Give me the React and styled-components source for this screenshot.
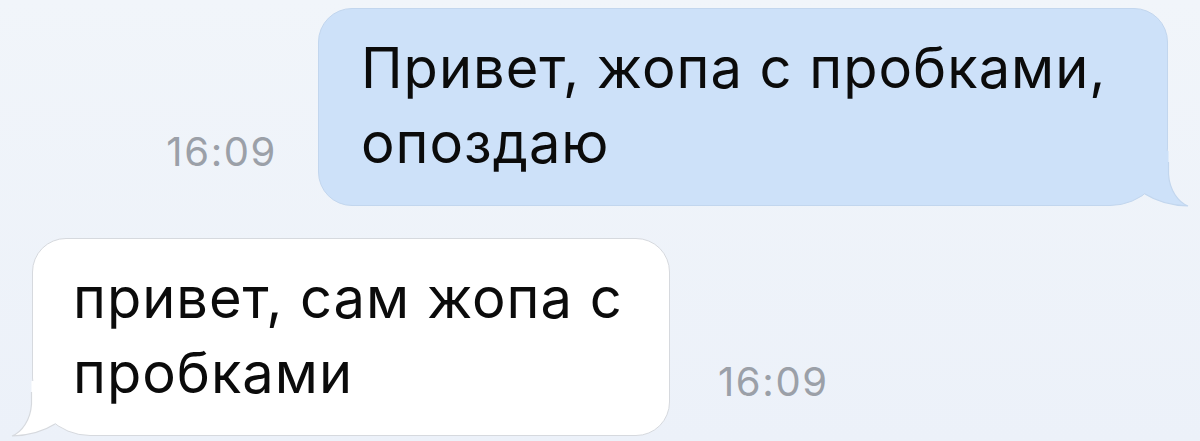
import React from "react";
import styled, { createGlobalStyle } from "styled-components";

const Global = createGlobalStyle`
  html, body { margin: 0; padding: 0; background: #edf2f9; }
  body { font-family: Inter, "Noto Sans", "Liberation Sans", sans-serif; overflow: hidden; }
`;

const Screen = styled.div`
  width: 1200px;
  height: 441px;
  box-sizing: border-box;
  padding: 8px 32px 0 32px;
  display: flex;
  flex-direction: column;
  gap: 32px;
  background: linear-gradient(#f1f5fa, #ecf1f9);
`;

const Row = styled.div`
  display: flex;
  align-items: flex-end;
  justify-content: ${(p) => (p.$out ? "flex-end" : "flex-start")};
`;

const Time = styled.div`
  font-size: 40px;
  line-height: 48px;
  color: #9ba0a8;
  letter-spacing: 1.6px;
  margin-bottom: 30px;
  ${(p) => (p.$out ? `margin-right: ${p.$gap}px;` : `margin-left: ${p.$gap}px;`)}
`;

const Bubble = styled.div`
  position: relative;
  box-sizing: border-box;
  width: ${(p) => p.$width}px;
  padding: 22px 30px 24px ${(p) => (p.$out ? 42 : 40)}px;
  border: 1px solid ${(p) => (p.$out ? "#c2d6ee" : "#d6d9de")};
  background: ${(p) => (p.$out ? "#cde1f9" : "#ffffff")};
  border-radius: ${(p) => (p.$out ? "34px 34px 58px 34px" : "34px 34px 34px 58px")};
  font-size: 56px;
  line-height: 75px;
  color: #0b0b0b;
  letter-spacing: 1px;
`;

const Line = styled.span`
  display: block;
  white-space: nowrap;
`;

const TailSvg = styled.svg`
  position: absolute;
  bottom: -3px;
  ${(p) => (p.$out ? "right: -25px;" : "left: -25px; transform: scaleX(-1);")}
  width: 64px;
  height: 60px;
  overflow: visible;
`;

function Tail({ out }) {
  const fill = out ? "#cde1f9" : "#ffffff";
  const stroke = out ? "#c2d6ee" : "#d6d9de";
  return (
    <TailSvg $out={out} viewBox="0 0 64 60">
      <path
        d="M17 46 C28 53 44 57.5 60 58 C50 54 41.5 42 40.5 26 L40.5 3 L2 3 Z"
        fill={fill}
      />
      <path
        d="M17 46 C28 53 44 57.5 60 58 C50 54 41.5 42 40.5 26 L40.5 14"
        fill="none"
        stroke={stroke}
        strokeWidth="1.2"
      />
    </TailSvg>
  );
}

const messages = [
  { out: true, width: 850, gap: 41, lines: ["Привет, жопа с пробками,", "опоздаю"], time: "16:09" },
  { out: false, width: 638, gap: 48, lines: ["привет, сам жопа с", "пробками"], time: "16:09" },
];

export default function App() {
  return (
    <>
      <Global />
      <Screen>
        {messages.map((m, i) => (
          <Row key={i} $out={m.out}>
            {m.out && <Time $out $gap={m.gap}>{m.time}</Time>}
            <Bubble $out={m.out} $width={m.width}>
              {m.lines.map((l, j) => (
                <Line key={j}>{l}</Line>
              ))}
              <Tail out={m.out} />
            </Bubble>
            {!m.out && <Time $gap={m.gap}>{m.time}</Time>}
          </Row>
        ))}
      </Screen>
    </>
  );
}
